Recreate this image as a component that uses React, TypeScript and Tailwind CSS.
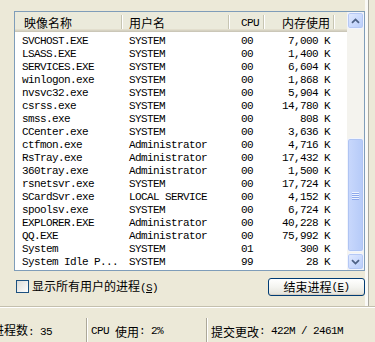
import React from 'react';

type Proc = { name: string; user: string; cpu: string; mem: string };

const procs: Proc[] = [
  { name: 'SVCHOST.EXE', user: 'SYSTEM', cpu: '00', mem: '7,000 K' },
  { name: 'LSASS.EXE', user: 'SYSTEM', cpu: '00', mem: '1,400 K' },
  { name: 'SERVICES.EXE', user: 'SYSTEM', cpu: '00', mem: '6,604 K' },
  { name: 'winlogon.exe', user: 'SYSTEM', cpu: '00', mem: '1,868 K' },
  { name: 'nvsvc32.exe', user: 'SYSTEM', cpu: '00', mem: '5,904 K' },
  { name: 'csrss.exe', user: 'SYSTEM', cpu: '00', mem: '14,780 K' },
  { name: 'smss.exe', user: 'SYSTEM', cpu: '00', mem: '808 K' },
  { name: 'CCenter.exe', user: 'SYSTEM', cpu: '00', mem: '3,636 K' },
  { name: 'ctfmon.exe', user: 'Administrator', cpu: '00', mem: '4,716 K' },
  { name: 'RsTray.exe', user: 'Administrator', cpu: '00', mem: '17,432 K' },
  { name: '360tray.exe', user: 'Administrator', cpu: '00', mem: '1,500 K' },
  { name: 'rsnetsvr.exe', user: 'SYSTEM', cpu: '00', mem: '17,724 K' },
  { name: 'SCardSvr.exe', user: 'LOCAL SERVICE', cpu: '00', mem: '4,152 K' },
  { name: 'spoolsv.exe', user: 'SYSTEM', cpu: '00', mem: '6,724 K' },
  { name: 'EXPLORER.EXE', user: 'Administrator', cpu: '00', mem: '40,228 K' },
  { name: 'QQ.EXE', user: 'Administrator', cpu: '00', mem: '75,992 K' },
  { name: 'System', user: 'SYSTEM', cpu: '01', mem: '300 K' },
  { name: 'System Idle P...', user: 'SYSTEM', cpu: '99', mem: '28 K' },
];

const CJK_RE = /([\u3000-\u9fff\uff00-\uffef]+)/;

// half-width ascii in mono, CJK in full-width, like SimSun
function Txt({ s }: { s: string }) {
  const parts = s.split(CJK_RE).filter(Boolean);
  return (
    <>
      {parts.map((p, i) =>
        CJK_RE.test(p) ? (
          <span key={i} className="font-['Noto_Sans_CJK_SC',sans-serif] text-[12px]">
            {p}
          </span>
        ) : (
          <span key={i} className="font-['Liberation_Mono',monospace] text-[11px] tracking-[-0.6px] whitespace-pre">
            {p}
          </span>
        )
      )}
    </>
  );
}

const Mono = ({ children }: { children: React.ReactNode }) => (
  <span className="font-['Liberation_Mono',monospace] text-[11px] tracking-[-0.6px] whitespace-pre">{children}</span>
);

const Divider = () => <div className="w-px h-[14px] bg-[#C7C5B2] shadow-[1px_0_0_#FFFFFF] shrink-0" />;

function Header() {
  return (
    <div className="grid grid-cols-[107px_107px_35px_70px_1fr] h-[20px] bg-[#EBEADB] shadow-[inset_0_-1px_0_#CBC7B8,inset_0_-2px_0_#D6D2C2,inset_0_-3px_0_#E2DECD] leading-[17px]">
      <div className="flex items-center justify-between pb-[2px]">
        <span className="pl-[9px]"><Txt s="映像名称" /></span>
        <Divider />
      </div>
      <div className="flex items-center justify-between pb-[2px]">
        <span className="pl-[7px]"><Txt s="用户名" /></span>
        <Divider />
      </div>
      <div className="flex items-center justify-between pb-[2px]">
        <span className="pl-[12px]"><Txt s="CPU" /></span>
        <Divider />
      </div>
      <div className="flex items-center justify-end gap-[3px] pb-[2px]">
        <span><Txt s="内存使用" /></span>
        <Divider />
      </div>
      <div />
    </div>
  );
}

function Chevron({ down }: { down?: boolean }) {
  return (
    <svg width="9" height="6" viewBox="0 0 9 6">
      <path d={down ? 'M1 1.2L4.5 4.6L8 1.2' : 'M1 4.8L4.5 1.4L8 4.8'} fill="none" stroke="#4D6185" strokeWidth="1.8" />
    </svg>
  );
}

function ScrollBtn({ down }: { down?: boolean }) {
  return (
    <div className="h-[17px] w-[17px] rounded-[3px] border border-[#F2F5FD] bg-gradient-to-br from-[#E3EBFE] via-[#CCDBFD] to-[#B7CCF9] shadow-[inset_0_0_0_1px_#B5C8F5] flex items-center justify-center">
      <Chevron down={down} />
    </div>
  );
}

function ScrollBar() {
  return (
    <div className="w-[17px] flex flex-col bg-[#F4F3EE]">
      <ScrollBtn />
      <div className="flex-1 flex flex-col justify-end">
        <div className="h-[114px] mb-[1px] rounded-[3px] border border-[#F2F5FD] bg-gradient-to-r from-[#C9D8FC] to-[#B5CAF8] shadow-[inset_0_0_0_1px_#AFC4F3] flex flex-col items-center justify-center gap-px">
          {[0, 1, 2, 3].map((i) => (
            <div key={i} className="w-[7px] h-px bg-[#EEF4FE] shadow-[0_1px_0_#8CA8EC]" />
          ))}
        </div>
      </div>
      <ScrollBtn down />
    </div>
  );
}

function ProcRow({ p }: { p: Proc }) {
  return (
    <div className="grid grid-cols-[107px_107px_35px_70px] h-[13px] items-center leading-[13px] text-black">
      <div className="pl-[7px] overflow-hidden whitespace-nowrap"><Txt s={p.name} /></div>
      <div className="pl-[7px] overflow-hidden whitespace-nowrap"><Txt s={p.user} /></div>
      <div className="pl-[12px]"><Txt s={p.cpu} /></div>
      <div className="text-right pr-[4px] whitespace-nowrap"><Txt s={p.mem} /></div>
    </div>
  );
}

export default function App() {
  return (
    <div className="w-[375px] h-[342px] bg-[#ECE9D8] flex flex-col overflow-hidden text-black">
      <div className="flex h-[311px]">
        <div className="w-[365px] flex flex-col">
          <div className="mt-[11px] ml-[14px] w-[351px] h-[260px] border border-[#7F9DB9] bg-white flex">
            <div className="flex-1 flex flex-col overflow-hidden">
              <Header />
              <div>
                {procs.map((p) => (
                  <ProcRow key={p.name} p={p} />
                ))}
              </div>
            </div>
            <ScrollBar />
          </div>
          <div className="mt-[7px] flex items-center justify-between pl-[16px] h-[18px]">
            <div className="flex items-center gap-[2px] leading-[14px] -mt-[2px]">
              <div className="w-[13px] h-[13px] border border-[#1C5180] bg-gradient-to-br from-[#DCDCD7] to-[#FFFFFF]" />
              <span className="pl-[1px]">
                <Txt s="显示所有用户的进程" />
                <Mono>
                  (<span className="underline">S</span>)
                </Mono>
              </span>
            </div>
            <div className="w-[97px] h-[18px] rounded-[3px] border border-[#003C74] bg-gradient-to-b from-[#FFFFFF] via-[#F4F4F0] to-[#E3E2DA] shadow-[inset_0_-1px_0_#D6D0C5] flex items-center justify-center leading-[14px]">
              <Txt s="结束进程" />
              <Mono>
                (<span className="underline">E</span>)
              </Mono>
            </div>
          </div>
        </div>
        <div className="w-[3px] bg-[#FAFAF7]" />
        <div className="w-px bg-[#A9A89F]" />
      </div>
      <div className="flex-1 border-t border-[#C4C0AE] shadow-[inset_0_1px_0_#FFFFFF] flex">
        <div className="mt-[11px] w-[86px] flex items-center leading-[19px] whitespace-nowrap">
          <span className="-ml-[8px] mt-[2px]"><Txt s="进程数: 35" /></span>
        </div>
        <div className="mt-[11px] w-[120px] flex items-center pl-[4px] pt-[2px] border-l border-[#ACA899] shadow-[inset_1px_0_0_#FFFFFF] leading-[19px] whitespace-nowrap">
          <Txt s="CPU 使用: 2%" />
        </div>
        <div className="mt-[11px] flex-1 flex items-center pl-[4px] pt-[2px] border-l border-[#ACA899] shadow-[inset_1px_0_0_#FFFFFF] leading-[19px] whitespace-nowrap">
          <Txt s="提交更改: 422M / 2461M" />
        </div>
      </div>
    </div>
  );
}
